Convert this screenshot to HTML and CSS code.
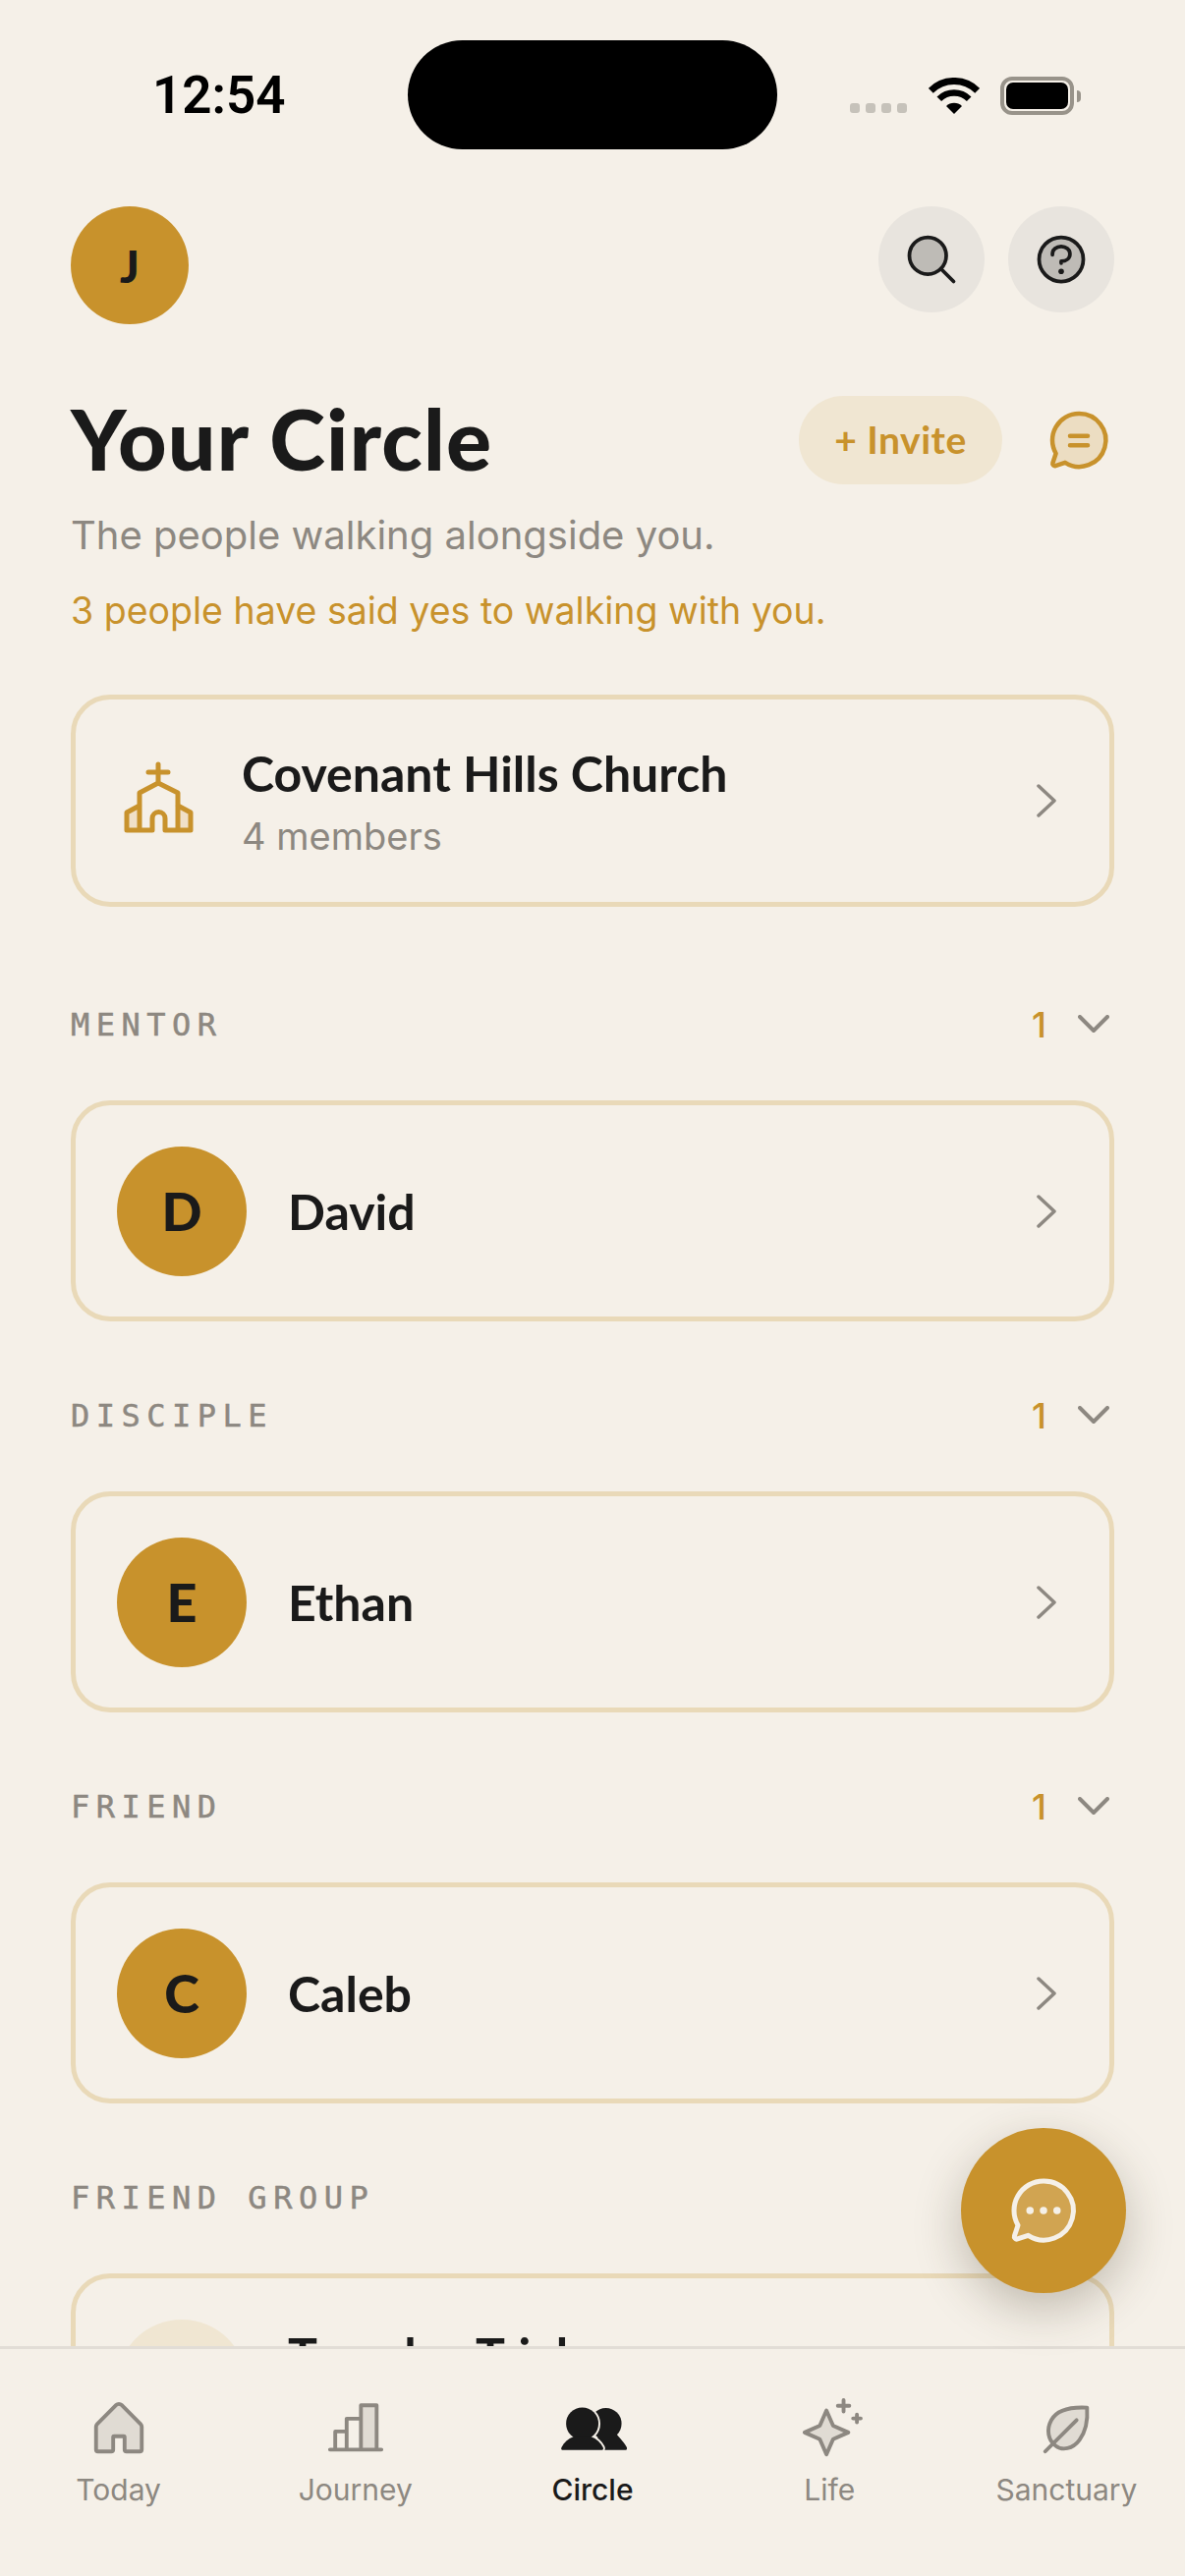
FILE: index.html
```html
<!DOCTYPE html>
<html lang="en">
<head>
    <meta charset="utf-8">
    <title>Your Circle</title>
    <link rel="stylesheet" href="styles.css">
</head>
<body>
    <svg class="defs" width="0" height="0">
        <symbol id="chev-right" viewBox="0 0 20 34"><path d="M2 2l16 15L2 32"/></symbol>
        <symbol id="chev-down" viewBox="0 0 32 20"><path d="M2 2l14 14L30 2"/></symbol>
    </svg>

    <header class="status">
        <div class="status-left">12:54</div>
        <div class="island"></div>
        <div class="status-right">
            <div class="signal"><i></i><i></i><i></i><i></i></div>
            <svg class="wifi" viewBox="0 0 52 38">
                <path class="wifi-arc big" d="M2.3 13.3a33.5 33.5 0 0 1 47.4 0"/>
                <path class="wifi-arc mid" d="M10.8 21.8a21.5 21.5 0 0 1 30.4 0"/>
                <path d="M26 37l-8-8a11.3 11.3 0 0 1 16 0z"/>
            </svg>
            <div class="battery"><div class="battery-level"></div></div>
            <div class="battery-nub"></div>
        </div>
    </header>

    <main class="scroll">
        <div class="topbar">
            <div class="me">J</div>
            <div class="topbar-btns">
                <div class="round-btn">
                    <svg class="icon dark" viewBox="0 0 256 256">
                        <circle class="fill" cx="112" cy="112" r="80"/>
                        <circle cx="112" cy="112" r="80"/>
                        <path d="M168.6 168.6L224 224"/>
                    </svg>
                </div>
                <div class="round-btn">
                    <svg class="icon dark" viewBox="0 0 256 256">
                        <circle class="fill" cx="128" cy="128" r="96"/>
                        <circle cx="128" cy="128" r="96"/>
                        <path d="M128 144v-8c22 0 38-13 38-32s-17-32-38-32-38 13-38 32v4"/>
                        <circle class="dot" cx="128" cy="180" r="12"/>
                    </svg>
                </div>
            </div>
        </div>

        <div class="title-row">
            <h1>Your Circle</h1>
            <div class="invite">+ Invite</div>
            <svg class="icon gold chat" viewBox="0 0 256 256">
                <path class="fill" d="M128 32a96 96 0 0 0-83.1 144.06l-11.5 34.5a8 8 0 0 0 10.1 10.1l34.5-11.5A96 96 0 1 0 128 32Z"/>
                <path d="M128 32a96 96 0 0 0-83.1 144.06l-11.5 34.5a8 8 0 0 0 10.1 10.1l34.5-11.5A96 96 0 1 0 128 32Z"/>
                <path d="M96 113h64M96 147h64"/>
            </svg>
        </div>
        <p class="sub">The people walking alongside you.</p>
        <p class="sub yes">3 people have said yes to walking with you.</p>

        <div class="card church">
            <svg class="church-icon" viewBox="0 0 74 77">
                <path class="wing" d="M18 47L5 54v18h13zM57 47l13 7v18H57z"/>
                <path d="M37 5v19M27 13h20M18 72V34l19-10 20 10v38M18 47L5 54v18h26V60a6.5 6.5 0 0 1 13 0v12h26V54l-13-7"/>
            </svg>
            <div class="card-text">
                <div class="name">Covenant Hills Church</div>
                <div class="count">4 members</div>
            </div>
            <svg class="chev"><use href="#chev-right"/></svg>
        </div>

        <section>
            <div class="sec-head">
                <span class="sec-label">MENTOR</span>
                <span class="sec-num">1</span>
                <svg class="chev-d"><use href="#chev-down"/></svg>
            </div>
            <div class="card">
                <div class="avatar">D</div>
                <div class="name">David</div>
                <svg class="chev"><use href="#chev-right"/></svg>
            </div>
        </section>

        <section>
            <div class="sec-head">
                <span class="sec-label">DISCIPLE</span>
                <span class="sec-num">1</span>
                <svg class="chev-d"><use href="#chev-down"/></svg>
            </div>
            <div class="card">
                <div class="avatar">E</div>
                <div class="name">Ethan</div>
                <svg class="chev"><use href="#chev-right"/></svg>
            </div>
        </section>

        <section>
            <div class="sec-head">
                <span class="sec-label">FRIEND</span>
                <span class="sec-num">1</span>
                <svg class="chev-d"><use href="#chev-down"/></svg>
            </div>
            <div class="card">
                <div class="avatar">C</div>
                <div class="name">Caleb</div>
                <svg class="chev"><use href="#chev-right"/></svg>
            </div>
        </section>

        <section>
            <div class="sec-head">
                <span class="sec-label">FRIEND GROUP</span>
            </div>
            <div class="card">
                <div class="avatar pale"></div>
                <div class="name raised">Tuesday Trial</div>
            </div>
        </section>
    </main>

    <div class="fab">
        <svg class="icon cream" viewBox="0 0 256 256">
            <path class="fill" d="M128 32a96 96 0 0 0-83.1 144.06l-11.5 34.5a8 8 0 0 0 10.1 10.1l34.5-11.5A96 96 0 1 0 128 32Z"/>
            <path d="M128 32a96 96 0 0 0-83.1 144.06l-11.5 34.5a8 8 0 0 0 10.1 10.1l34.5-11.5A96 96 0 1 0 128 32Z"/>
            <circle class="dot" cx="84" cy="128" r="12"/>
            <circle class="dot" cx="128" cy="128" r="12"/>
            <circle class="dot" cx="172" cy="128" r="12"/>
        </svg>
    </div>

    <nav class="tabs">
        <div class="tab">
            <svg class="icon" viewBox="0 0 256 256">
                <path class="fill" d="M224 120v96a8 8 0 0 1-8 8h-56a8 8 0 0 1-8-8v-52a4 4 0 0 0-4-4h-40a4 4 0 0 0-4 4v52a8 8 0 0 1-8 8H40a8 8 0 0 1-8-8v-96a16 16 0 0 1 4.7-11.3l80-80a16 16 0 0 1 22.6 0l80 80A16 16 0 0 1 224 120Z"/>
                <path d="M224 120v96a8 8 0 0 1-8 8h-56a8 8 0 0 1-8-8v-52a4 4 0 0 0-4-4h-40a4 4 0 0 0-4 4v52a8 8 0 0 1-8 8H40a8 8 0 0 1-8-8v-96a16 16 0 0 1 4.7-11.3l80-80a16 16 0 0 1 22.6 0l80 80A16 16 0 0 1 224 120Z"/>
            </svg>
            <span>Today</span>
        </div>
        <div class="tab">
            <svg class="icon" viewBox="0 0 256 256">
                <rect class="fill" x="150" y="30" width="66" height="186"/>
                <path d="M150 216V30h66v186M90 216V86h60M42 216v-76h48M20 216h216"/>
            </svg>
            <span>Journey</span>
        </div>
        <div class="tab active">
            <svg class="icon people" viewBox="0 0 256 256">
                <circle cx="184" cy="107" r="66"/>
                <path d="M150 218v-78h70c25 30 42 46 52 66 3 8-1 12-8 12z"/>
                <circle class="front" cx="85" cy="107" r="68"/>
                <path class="front" d="M-2 206c10-20 28-36 50-44h74c22 8 40 24 50 44 4 8 0 12-8 12H6c-8 0-12-4-8-12z"/>
                <circle cx="85" cy="107" r="68"/>
                <path d="M-2 206c10-20 28-36 50-44h74c22 8 40 24 50 44 4 8 0 12-8 12H6c-8 0-12-4-8-12z"/>
            </svg>
            <span>Circle</span>
        </div>
        <div class="tab">
            <svg class="icon" viewBox="0 0 256 256">
                <path class="fill" d="M116 52l28 64 64 28-64 28-28 64-28-64-64-28 64-28z"/>
                <path d="M116 52l28 64 64 28-64 28-28 64-28-64-64-28 64-28z"/>
                <path d="M188 8v48M164 32h48M244 69v32M228 85h32"/>
            </svg>
            <span>Life</span>
        </div>
        <div class="tab">
            <svg class="icon" viewBox="0 0 256 256">
                <path class="fill" d="M216 40c-76-4-128 12-150 52-22 40-14 84 18 108 28 22 72 14 100-24 24-32 36-80 32-136z"/>
                <path d="M216 40c-76-4-128 12-150 52-22 40-14 84 18 108 28 22 72 14 100-24 24-32 36-80 32-136z"/>
                <path d="M172 92L40 224"/>
            </svg>
            <span>Sanctuary</span>
        </div>
    </nav>
</body>
</html>
```

FILE: styles.css
```css
* {
    box-sizing: border-box;
}

html, body {
    margin: 0;
    padding: 0;
}

body {
    position: relative;
    width: 1206px;
    height: 2622px;
    display: flex;
    flex-direction: column;
    overflow: hidden;
    background-color: #f5f0e8;
    color: #1a1a1a;
    font-family: "Inter", sans-serif;
}

.defs {
    position: absolute;
}

/* status bar */
.status {
    flex: none;
    display: flex;
    align-items: center;
    height: 111px;
    margin-top: 41px;
}

.status-left {
    width: 415px;
    padding-left: 155px;
    font-family: "Roboto", sans-serif;
    font-size: 53px;
    font-weight: 600;
    color: #000;
}

.island {
    width: 376px;
    height: 111px;
    border-radius: 56px;
    background-color: #000;
}

.status-right {
    display: flex;
    align-items: center;
    padding-left: 74px;
    padding-top: 2px;
}

.signal {
    display: flex;
    gap: 6px;
    margin-top: 24px;
    margin-right: 22px;
}

.signal i {
    width: 10px;
    height: 10px;
    border-radius: 3px;
    background-color: #c6c2ba;
}

.wifi {
    width: 52px;
    height: 38px;
    margin-right: 21px;
    fill: #000;
}

.wifi-arc {
    fill: none;
    stroke: #000;
}

.wifi-arc.big {
    stroke-width: 7;
}

.wifi-arc.mid {
    stroke-width: 6.5;
}

.battery {
    width: 75px;
    height: 39px;
    padding: 2px;
    border: 4px solid #98938a;
    border-radius: 12px;
}

.battery-level {
    width: 100%;
    height: 100%;
    border-radius: 7px;
    background-color: #000;
}

.battery-nub {
    width: 4px;
    height: 12px;
    margin-left: 3px;
    border-radius: 0 6px 6px 0;
    background-color: #98938a;
}

/* main */
.scroll {
    flex: 1;
    min-height: 0;
    overflow: hidden;
    padding: 58px 72px 0;
}

.topbar {
    display: flex;
    justify-content: space-between;
    align-items: flex-start;
}

.me {
    width: 120px;
    height: 120px;
    border-radius: 50%;
    background-color: #c8922c;
    display: flex;
    align-items: center;
    justify-content: center;
    font-family: "Lato", sans-serif;
    font-size: 46px;
    font-weight: 900;
}

.topbar-btns {
    display: flex;
    gap: 24px;
}

.round-btn {
    width: 108px;
    height: 108px;
    border-radius: 50%;
    background-color: #e8e4de;
    display: flex;
    align-items: center;
    justify-content: center;
}

/* icons, duotone look */
.icon {
    width: 60px;
    height: 60px;
    overflow: visible;
    fill: none;
    stroke: #8d8881;
    stroke-width: 16;
    stroke-linecap: round;
    stroke-linejoin: round;
}

.icon .fill {
    fill: #8d8881;
    fill-opacity: 0.2;
    stroke: none;
}

.icon .dot {
    stroke: none;
}

.icon.dark {
    stroke: #1a1a1a;
}

.icon.dark .fill {
    fill: #1a1a1a;
}

.icon.dark .dot {
    fill: #1a1a1a;
}

.icon.gold {
    stroke: #c8922c;
}

.icon.gold .fill {
    fill: #c8922c;
}

.icon.cream {
    width: 80px;
    height: 80px;
    stroke: #f5f0e8;
}

.icon.cream .fill {
    fill: #f5f0e8;
}

.icon.cream .dot {
    fill: #f5f0e8;
}

.chat {
    flex: none;
    width: 72px;
    height: 72px;
    margin-left: 42px;
}

.title-row {
    display: flex;
    align-items: center;
    height: 90px;
    margin-top: 73px;
}

h1 {
    flex: 1;
    margin: 0 0 4px;
    font-family: "Lato", sans-serif;
    font-size: 86px;
    font-weight: 900;
    letter-spacing: 1.2px;
    line-height: 86px;
}

.invite {
    width: 207px;
    height: 90px;
    padding-bottom: 2px;
    border-radius: 45px;
    background-color: #f0e6d2;
    color: #c8922c;
    display: flex;
    align-items: center;
    justify-content: center;
    font-family: "Lato", sans-serif;
    font-size: 39px;
    font-weight: 700;
    letter-spacing: 0.5px;
}

.sub {
    margin: 27px 0 0;
    font-size: 40px;
    line-height: 50px;
    color: #8d8881;
}

.sub.yes {
    margin-top: 27px;
    font-size: 37.5px;
    color: #c8922c;
}

/* cards */
.card {
    display: flex;
    align-items: center;
    height: 225px;
    padding: 0 54px 0 42px;
    border: 5px solid #e9d9b8;
    border-radius: 40px;
}

.card.church {
    height: 216px;
    margin-top: 60px;
    padding-left: 47px;
}

.church-icon {
    flex: none;
    width: 74px;
    height: 77px;
    margin-right: 48px;
    margin-bottom: 7px;
    fill: none;
    stroke: #c8922c;
    stroke-width: 5;
    stroke-linejoin: round;
    stroke-linecap: round;
}

.church-icon .wing {
    fill: #f0e0c8;
    stroke: none;
}

.card-text {
    flex: 1;
}

.name {
    flex: 1;
    font-family: "Lato", sans-serif;
    font-size: 50px;
    font-weight: 700;
    line-height: 60px;
}

.name.raised {
    margin-bottom: 60px;
}

.avatar + .name {
    margin-left: 42px;
}

.count {
    margin-top: 11px;
    font-size: 38px;
    line-height: 46px;
    color: #8d8881;
}

.avatar {
    flex: none;
    width: 132px;
    height: 132px;
    border-radius: 50%;
    background-color: #c8922c;
    display: flex;
    align-items: center;
    justify-content: center;
    font-family: "Lato", sans-serif;
    font-size: 54px;
    font-weight: 900;
}

.avatar.pale {
    background-color: #f0e6d2;
}

.chev {
    flex: none;
    width: 20px;
    height: 34px;
    fill: none;
    stroke: #8d8881;
    stroke-width: 3.5;
    stroke-linecap: round;
    stroke-linejoin: round;
}

/* sections */
section {
    margin-top: 71px;
}

.card.church + section {
    margin-top: 95px;
}

.sec-head {
    display: flex;
    align-items: center;
    height: 50px;
    margin-bottom: 52px;
}

.sec-label {
    flex: 1;
    font-family: "DejaVu Sans Mono", monospace;
    font-size: 32px;
    letter-spacing: 6.5px;
    color: #8d8881;
    -webkit-text-stroke: 0.5px #8d8881;
}

.sec-num {
    font-family: "Inter", sans-serif;
    font-size: 36px;
    font-weight: 500;
    color: #c8922c;
}

.chev-d {
    flex: none;
    width: 32px;
    height: 20px;
    margin-left: 32px;
    margin-right: 5px;
    fill: none;
    stroke: #8d8881;
    stroke-width: 4;
    stroke-linecap: round;
    stroke-linejoin: round;
}

/* floating chat button */
.fab {
    position: absolute;
    right: 60px;
    bottom: 288px;
    width: 168px;
    height: 168px;
    border-radius: 50%;
    background-color: #c8922c;
    box-shadow: 0 16px 48px rgba(60, 50, 30, 0.28);
    display: flex;
    align-items: center;
    justify-content: center;
}

/* tab bar */
.tabs {
    flex: none;
    display: flex;
    height: 234px;
    padding-top: 50px;
    border-top: 3px solid #e2ddd6;
    background-color: #f5f0e8;
}

.tab {
    flex: 1;
    display: flex;
    flex-direction: column;
    align-items: center;
    gap: 11px;
    font-size: 30px;
    line-height: 40px;
    color: #8d8881;
}

.tab .icon {
    width: 62px;
    height: 62px;
}

.tab.active {
    color: #1a1a1a;
    font-weight: 500;
}

.people {
    fill: #1a1a1a;
    stroke: none;
}

.people .front {
    stroke: #f5f0e8;
    stroke-width: 16;
}
```
